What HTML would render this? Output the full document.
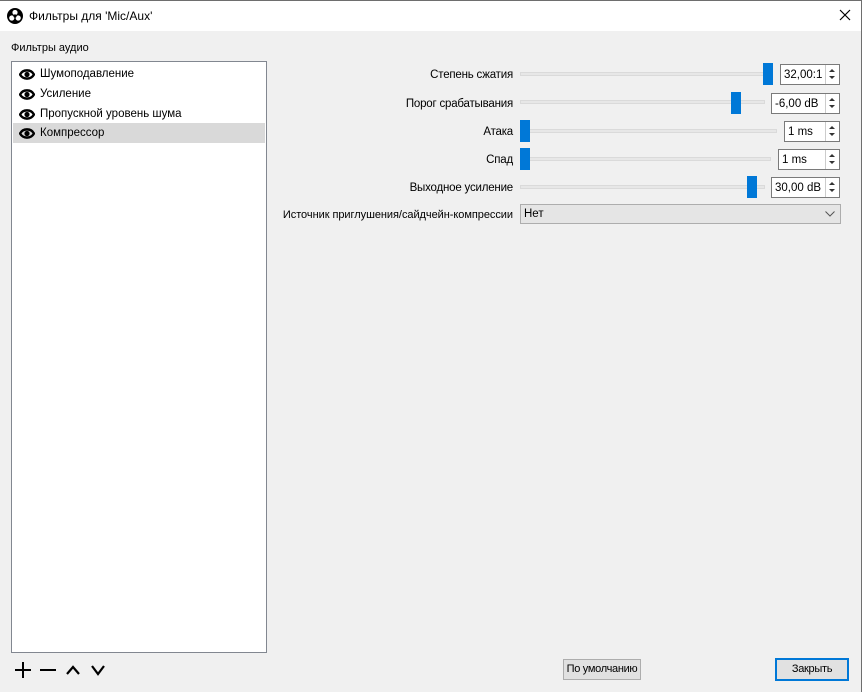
<!DOCTYPE html>
<html><head><meta charset="utf-8"><style>
*{margin:0;padding:0;box-sizing:border-box}
body{width:862px;height:692px;background:#f0f0f0;font-family:"Liberation Sans","DejaVu Sans",sans-serif;font-size:11px;color:#000;position:relative;overflow:hidden}
.a{position:absolute}
.title{left:0;top:0;width:862px;height:31px;background:#fff;border-top:1px solid #6e6e6e}
.rb{left:861px;top:0;width:1px;height:692px;background:#6e6e6e}
.list{left:11px;top:61px;width:256px;height:592px;background:#fff;border:1px solid #828790}
.item{position:absolute;left:1px;width:252px;height:20px;line-height:21px;padding-left:27px;font-size:11.5px}
.item svg{position:absolute;left:6px;top:5px}
.lbl{right:349px;text-align:right;white-space:nowrap;font-size:11.5px;letter-spacing:-0.2px}
.track{height:4px;background:#e7e7e7;border:1px solid #dadada;left:520px}
.h{width:10px;height:22px;background:#0078d7}
.spin{height:21px;background:#fff;border:1px solid #7a7a7a;padding-left:3px;line-height:20px;font-size:11.5px}
.spin .ar{position:absolute;right:0;top:0;width:14px;height:19px;border-left:1px solid #ccc;background:#fff}
.spin .ar:before{content:"";position:absolute;left:3px;top:4px;border:3px solid transparent;border-bottom:3px solid #333;border-top:0}
.spin .ar:after{content:"";position:absolute;left:3px;top:11px;border:3px solid transparent;border-top:3px solid #333;border-bottom:0}
.btn{background:#e1e1e1;border:1px solid #adadad;text-align:center;line-height:19px;font-size:11px;letter-spacing:-0.3px}
</style></head><body>
<div class="a title"></div>
<div class="a rb"></div>
<svg class="a" style="left:7px;top:8px" width="16" height="16" viewBox="0 0 16 16"><circle cx="8" cy="8" r="8" fill="#000"/><circle cx="8" cy="4.5" r="2.6" fill="#fff"/><circle cx="4.8" cy="10" r="2.6" fill="#fff"/><circle cx="11.2" cy="10" r="2.6" fill="#fff"/><circle cx="8" cy="8" r="1.6" fill="#000"/></svg>
<div class="a" style="left:29px;top:9px;font-size:12px">Фильтры для 'Mic/Aux'</div>
<svg class="a" style="left:839px;top:9px" width="12" height="12"><path d="M1 1L11 11M11 1L1 11" stroke="#000" stroke-width="1.2"/></svg>
<div class="a" style="left:11px;top:42px;font-size:11px">Фильтры аудио</div>
<div class="a list">
<div class="item" style="top:2px">Шумоподавление<svg width="16" height="11" viewBox="0 0 16 11"><path d="M1 5.5C4 0 12 0 15 5.5C12 11 4 11 1 5.5Z" fill="none" stroke="#000" stroke-width="2.4"/><circle cx="8" cy="5.5" r="2.6" fill="#000"/></svg></div>
<div class="item" style="top:22px">Усиление<svg width="16" height="11" viewBox="0 0 16 11"><path d="M1 5.5C4 0 12 0 15 5.5C12 11 4 11 1 5.5Z" fill="none" stroke="#000" stroke-width="2.4"/><circle cx="8" cy="5.5" r="2.6" fill="#000"/></svg></div>
<div class="item" style="top:42px">Пропускной уровень шума<svg width="16" height="11" viewBox="0 0 16 11"><path d="M1 5.5C4 0 12 0 15 5.5C12 11 4 11 1 5.5Z" fill="none" stroke="#000" stroke-width="2.4"/><circle cx="8" cy="5.5" r="2.6" fill="#000"/></svg></div>
<div class="item" style="top:61px;background:#d9d9d9">Компрессор<svg width="16" height="11" viewBox="0 0 16 11"><path d="M1 5.5C4 0 12 0 15 5.5C12 11 4 11 1 5.5Z" fill="none" stroke="#000" stroke-width="2.4"/><circle cx="8" cy="5.5" r="2.6" fill="#000"/></svg></div>
</div>

<div class="a lbl" style="top:69px">Степень сжатия</div>
<div class="a track" style="top:72px;width:253px"></div>
<div class="a h" style="left:763px;top:63px"></div>
<div class="a spin" style="left:780px;top:64px;width:60px">32,00:1<div class="ar"></div></div>

<div class="a lbl" style="top:98px">Порог срабатывания</div>
<div class="a track" style="top:100px;width:245px"></div>
<div class="a h" style="left:731px;top:92px"></div>
<div class="a spin" style="left:771px;top:93px;width:69px">-6,00 dB<div class="ar"></div></div>

<div class="a lbl" style="top:126px">Атака</div>
<div class="a track" style="top:129px;width:257px"></div>
<div class="a h" style="left:520px;top:120px"></div>
<div class="a spin" style="left:784px;top:121px;width:56px">1 ms<div class="ar"></div></div>

<div class="a lbl" style="top:154px">Спад</div>
<div class="a track" style="top:157px;width:251px"></div>
<div class="a h" style="left:520px;top:148px"></div>
<div class="a spin" style="left:778px;top:149px;width:62px">1 ms<div class="ar"></div></div>

<div class="a lbl" style="top:182px">Выходное усиление</div>
<div class="a track" style="top:185px;width:245px"></div>
<div class="a h" style="left:747px;top:176px"></div>
<div class="a spin" style="left:771px;top:177px;width:69px">30,00 dB<div class="ar"></div></div>

<div class="a lbl" style="top:209px;font-size:11px;letter-spacing:-0.05px">Источник приглушения/сайдчейн-компрессии</div>
<div class="a" style="left:520px;top:204px;width:321px;height:20px;background:#e5e5e5;border:1px solid #adadad;padding-left:3px;line-height:19px;font-size:11.5px">Нет
<svg class="a" style="right:5px;top:6px" width="10" height="6"><path d="M0.5 0.5L5 5L9.5 0.5" fill="none" stroke="#555"/></svg></div>

<svg class="a" style="left:14px;top:661px" width="95" height="18"><path d="M1 9H17M9 1V17" stroke="#000" stroke-width="2"/><path d="M26 9H42" stroke="#000" stroke-width="2"/><path d="M53 13L59 6L65 13" fill="none" stroke="#000" stroke-width="2.2"/><path d="M78 5L84 13L90 5" fill="none" stroke="#000" stroke-width="2.2"/></svg>

<div class="a btn" style="left:563px;top:659px;width:78px;height:21px">По умолчанию</div>
<div class="a btn" style="left:775px;top:658px;width:74px;height:23px;border:2px solid #0078d7;line-height:19px">Закрыть</div>
</body></html>
